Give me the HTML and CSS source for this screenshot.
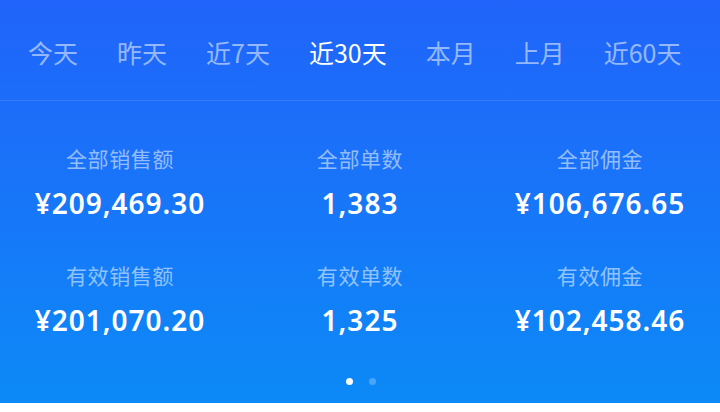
FILE: index.html
```html
<!DOCTYPE html>
<html lang="zh-CN">
<head>
<meta charset="utf-8">
<link rel="stylesheet" href="styles.css">
</head>
<body>
<div class="panel">
  <nav class="tabs">
    <span class="tab">今天</span>
    <span class="tab">昨天</span>
    <span class="tab">近7天</span>
    <span class="tab active">近30天</span>
    <span class="tab">本月</span>
    <span class="tab">上月</span>
    <span class="tab">近60天</span>
  </nav>
  <div class="stats">
    <div class="stat"><div class="label">全部销售额</div><div class="value">¥209,469.30</div></div>
    <div class="stat"><div class="label">全部单数</div><div class="value">1,383</div></div>
    <div class="stat"><div class="label">全部佣金</div><div class="value">¥106,676.65</div></div>
    <div class="stat"><div class="label">有效销售额</div><div class="value">¥201,070.20</div></div>
    <div class="stat"><div class="label">有效单数</div><div class="value">1,325</div></div>
    <div class="stat"><div class="label">有效佣金</div><div class="value">¥102,458.46</div></div>
  </div>
  <div class="dots"><span class="dot on"></span><span class="dot"></span></div>
</div>
</body>
</html>
```
FILE: styles.css
```css
* { box-sizing: border-box; }
html, body { margin: 0; padding: 0; background: #fff; }
body { width: 720px; height: 412px; overflow: hidden; font-family: "Noto Sans CJK SC", "Noto Sans", sans-serif; }
.panel {
  height: 403px;
  background: linear-gradient(180deg, #2064fa 0%, #1a72f9 40%, #0c8af7 100%);
  display: flex;
  flex-direction: column;
}
.tabs {
  height: 101px;
  display: flex;
  align-items: center;
  gap: 39px;
  padding: 5px 0 0 28px;
  border-bottom: 1px solid rgba(255,255,255,0.12);
}
.tab {
  font-size: 25px;
  color: rgba(255,255,255,0.55);
  white-space: nowrap;
  line-height: 1;
}
.tab.active { color: #fff; }
.stats {
  display: grid;
  grid-template-columns: repeat(3, 1fr);
  row-gap: 44px;
  padding-top: 44px;
}
.stat { display: flex; flex-direction: column; align-items: center; }
.label {
  font-size: 21px;
  letter-spacing: 0.6px;
  color: rgba(255,255,255,0.55);
  line-height: 26px;
}
.value {
  margin-top: 17px;
  font-family: "Noto Sans", "Noto Sans CJK SC", sans-serif;
  font-size: 28px;
  letter-spacing: 1px;
  font-weight: 600;
  color: #fff;
  line-height: 30px;
}
.dots {
  display: flex;
  justify-content: center;
  gap: 16px;
  margin-top: 43px;
  padding-left: 2px;
}
.dot { width: 7px; height: 7px; border-radius: 50%; background: rgba(255,255,255,0.25); }
.dot.on { background: #fff; }
```
